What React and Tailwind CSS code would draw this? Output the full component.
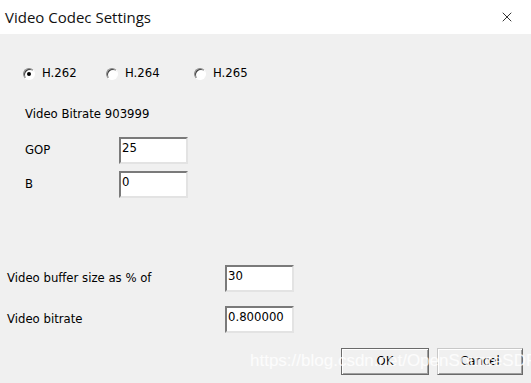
import { X } from 'lucide-react';

function Radio({ checked, label, width }) {
    return (
        <label className="flex items-center" style={{ width }}>
            <span className="w-[12px] h-[12px] rounded-full border border-[#8a8a8a] border-b-white border-r-white bg-white flex items-center justify-center shadow-[inset_1px_1px_0_#404040]">
                {checked && <span className="w-[4px] h-[4px] rounded-full bg-black" />}
            </span>
            <span className="ml-[7px]">{label}</span>
        </label>
    );
}

function Field({ value, className = '' }) {
    return (
        <div className={`h-[27px] bg-white border-2 border-t-[#7a7a7a] border-l-[#7a7a7a] border-b-[#e3e3e3] border-r-[#e3e3e3] pl-[1px] pt-[1px] leading-[16px] ${className}`}>
            {value}
        </div>
    );
}

export default function App() {
    return (
        <div className="w-[531px] h-[383px] overflow-hidden text-[11.7px] text-black bg-[#f0f0f0]" style={{ fontFamily: 'Tahoma, "DejaVu Sans", sans-serif' }}>
            {/* Title bar */}
            <div className="h-[34px] bg-white flex items-center justify-between pl-[5px] pr-[16px]">
                <span className="text-[15px] text-[#111]" style={{ fontFamily: '"Segoe UI", "Open Sans", sans-serif' }}>Video Codec Settings</span>
                <X className="w-[16px] h-[16px] text-black" strokeWidth={1.2} />
            </div>

            <div className="relative h-[349px]">
                {/* Codec radios */}
                <div className="flex pl-[23px] pt-[31px]">
                    <Radio checked label="H.262" width={83} />
                    <Radio label="H.264" width={88} />
                    <Radio label="H.265" />
                </div>

                <div className="pl-[25px] mt-[23px]">Video Bitrate 903999</div>

                <div className="flex items-center pl-[25px] mt-[14px]">
                    <span className="w-[94px]">GOP</span>
                    <Field value="25" className="w-[69px]" />
                </div>
                <div className="flex items-center pl-[25px] mt-[7px]">
                    <span className="w-[94px]">B</span>
                    <Field value="0" className="w-[69px]" />
                </div>

                <div className="flex items-center pl-[7px] mt-[67px]">
                    <span className="w-[218px]">Video buffer size as % of</span>
                    <Field value="30" className="w-[69px]" />
                </div>
                <div className="flex items-center pl-[7px] mt-[14px]">
                    <span className="w-[218px]">Video bitrate</span>
                    <Field value="0.800000" className="w-[69px]" />
                </div>

                {/* Buttons */}
                <div className="flex justify-end gap-[8px] pr-[8px] mt-[15px]">
                    <button className="w-[88px] h-[27px] border border-[#6a6a6a] bg-[#f0f0f0] shadow-[inset_1px_1px_0_#ffffff,inset_-1px_-1px_0_#a0a0a0]">OK</button>
                    <button className="w-[86px] h-[27px] border border-[#c8c8c8] border-b-[#6a6a6a] border-r-[#6a6a6a] bg-[#f0f0f0] shadow-[inset_1px_1px_0_#ffffff,inset_-1px_-1px_0_#a0a0a0]">Cancel</button>
                </div>

                {/* Watermark */}
                <div className="absolute left-[250px] top-[314px] text-[17px] text-white/80 pointer-events-none" style={{ fontFamily: '"Liberation Sans", Arial, sans-serif' }}>
                    https://blog.csdn.net/OpenSourceSDR
                </div>
            </div>
        </div>
    );
}
